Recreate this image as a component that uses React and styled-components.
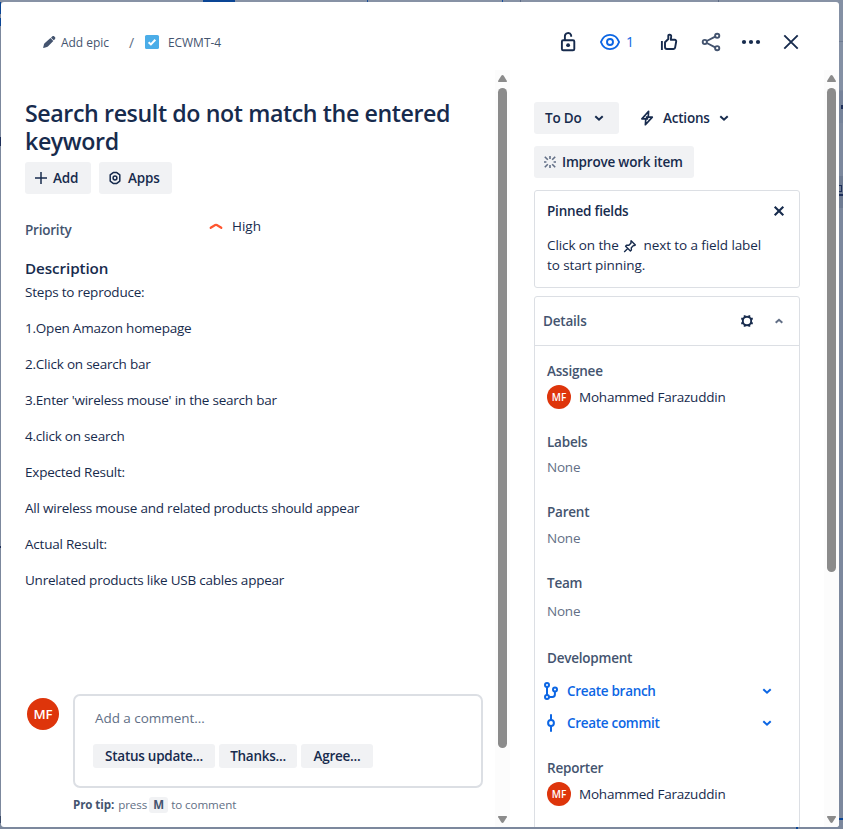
import React from 'react';
import styled, { createGlobalStyle } from 'styled-components';

const navy = '#172b4d';
const slate = '#44546f';
const subtle = '#626f86';
const blue = '#0c66e4';
const line = '#dcdfe4';
const neutral = '#f1f2f4';

const GlobalStyle = createGlobalStyle`
  * { box-sizing: border-box; }
  html, body { margin: 0; padding: 0; overflow: hidden; }
  body {
    font-family: "Open Sans", "Noto Sans", sans-serif;
    font-size: 13.5px;
    line-height: 20px;
    letter-spacing: -0.22px;
    color: ${navy};
  }
  svg { display: block; flex: none; overflow: visible; }
  p, h1, h2, h3 { margin: 0; }
`;

/* ---------- Frame ---------- */

const Backdrop = styled.div`
  position: relative;
  width: 843px;
  height: 829px;
  padding: 2px 4px 2px 1px;
  overflow: hidden;
  background: #7c889d;
`;

/* fragments of the board visible around the dialog */
const BoardMark = styled.span`
  position: absolute;
  left: ${(p) => p.$x}px;
  top: ${(p) => p.$y}px;
  width: ${(p) => p.$w}px;
  height: ${(p) => p.$h}px;
  background: ${(p) => p.$c};
`;

const Dialog = styled.div`
  position: relative;
  display: flex;
  flex-direction: column;
  width: 838px;
  height: 825px;
  border-radius: 3px;
  background: #fff;
  overflow: hidden;
`;

const Header = styled.header`
  display: flex;
  flex: none;
  justify-content: space-between;
  height: 68px;
  padding: 24px 36px 0 41px;
`;

const Breadcrumbs = styled.nav`
  display: flex;
  align-items: center;
  height: 33px;
  font-size: 12px;
  letter-spacing: -0.04px;
  color: ${slate};
`;

const Crumb = styled.span`
  display: flex;
  align-items: center;
  gap: ${(p) => p.$gap}px;
  svg { margin-bottom: 1px; }
`;

const CrumbSlash = styled.span`
  width: 16px;
  margin-left: 20px;
  font-size: 14px;
  color: ${subtle};
`;

const HeaderActions = styled.div`
  display: flex;
  align-items: center;
  gap: 18px;
  height: 32px;
`;

const IconCell = styled.span`
  display: flex;
  justify-content: center;
  width: ${(p) => p.$w || 24}px;
`;

const Watchers = styled.span`
  display: flex;
  align-items: center;
  gap: 4px;
  width: 41px;
  font-size: 14px;
  color: ${blue};
`;

const Body = styled.div`
  display: flex;
  flex: 1;
  min-height: 0;
`;

/* ---------- Scrollbars ---------- */

const Track = styled.div`
  display: flex;
  flex: none;
  flex-direction: column;
  align-items: center;
  width: 15px;
  padding: 5px 0 4px;
  background: #fcfcfc;
`;

const Thumb = styled.div`
  width: 9px;
  height: ${(p) => p.$h}px;
  margin: 6px 0 auto;
  border-radius: 4.5px;
  background: #8b8b8b;
`;

/* ---------- Main column ---------- */

const Main = styled.main`
  width: 494px;
  padding: 29px 12px 0 24px;
`;

const Title = styled.h1`
  width: 440px;
  font-size: 23.2px;
  font-weight: 600;
  line-height: 28px;
  letter-spacing: -0.4px;
`;

const ButtonRow = styled.div`
  display: flex;
  gap: ${(p) => p.$gap}px;
  margin-top: ${(p) => p.$top || 0}px;
`;

const Button = styled.span`
  display: flex;
  align-items: center;
  gap: ${(p) => p.$gap || 0}px;
  width: ${(p) => p.$w}px;
  height: 32px;
  padding-left: ${(p) => p.$pad}px;
  border-radius: 3px;
  background: ${(p) => (p.$plain ? 'transparent' : neutral)};
  font-weight: 600;
  letter-spacing: -0.2px;
  white-space: nowrap;
`;

const PriorityRow = styled.div`
  display: flex;
  align-items: flex-start;
  height: 42px;
  margin-top: 22px;
`;

const PriorityLabel = styled.span`
  width: 184px;
  padding-top: 4px;
  font-weight: 600;
  letter-spacing: -0.22px;
  color: ${slate};
`;

const PriorityValue = styled.span`
  display: flex;
  align-items: center;
  gap: 9px;
  letter-spacing: 0;
`;

const SectionTitle = styled.h2`
  font-size: 15.2px;
  font-weight: 600;
  line-height: 20px;
  letter-spacing: -0.08px;
`;

const Description = styled.div`
  display: flex;
  flex-direction: column;
  gap: 16px;
  margin-top: 4px;
`;

/* ---------- Comment ---------- */

const CommentArea = styled.div`
  display: flex;
  align-items: flex-start;
  gap: 14px;
  margin: 104px 0 0 2px;
`;

const Avatar = styled.span`
  display: flex;
  flex: none;
  align-items: center;
  justify-content: center;
  width: ${(p) => p.$size}px;
  height: ${(p) => p.$size}px;
  margin-top: ${(p) => p.$top || 0}px;
  border-radius: 50%;
  background: #de350b;
  color: #fff;
  font-size: ${(p) => (p.$size > 24 ? 13.2 : 10)}px;
  font-weight: 600;
  letter-spacing: 0;
`;

const CommentBox = styled.div`
  width: 410px;
  height: 94px;
  padding: 12px 0 0 18px;
  border: 2px solid ${line};
  border-radius: 7px;
`;

const Placeholder = styled.p`
  padding-left: 2px;
  letter-spacing: -0.05px;
  color: ${subtle};
`;

const Suggestions = styled.div`
  display: flex;
  gap: 4px;
  margin-top: 16px;
`;

const Suggestion = styled.span`
  width: ${(p) => p.$w}px;
  height: 24px;
  border-radius: 3px;
  background: ${neutral};
  font-weight: 600;
  line-height: 24px;
  letter-spacing: -0.26px;
  text-align: center;
`;

const ProTip = styled.p`
  display: flex;
  align-items: center;
  height: 16px;
  margin-top: 9px;
  font-size: 11.6px;
  letter-spacing: -0.08px;
  color: ${subtle};
  b { margin-right: 4px; font-weight: 700; letter-spacing: -0.1px; color: ${slate}; }
`;

const Key = styled.kbd`
  width: 19px;
  height: 16px;
  margin: 0 3px 0 2px;
  border-radius: 3px;
  background: ${neutral};
  font: 700 11.5px/16px "Open Sans", sans-serif;
  text-align: center;
  color: ${slate};
`;

/* ---------- Side column ---------- */

const Side = styled.aside`
  width: 314px;
  padding: 32px 24px 0;
  overflow: hidden;
`;

const Pinned = styled.section`
  height: 98px;
  margin-top: 12px;
  padding: 10px 14px 0 12px;
  border: 1px solid ${line};
  border-radius: 3px;
`;

const PanelHead = styled.div`
  display: flex;
  align-items: center;
  justify-content: space-between;
  font-weight: 600;
  letter-spacing: -0.2px;
`;

const PinnedText = styled.p`
  margin-top: 14px;
  letter-spacing: -0.1px;
  svg { display: inline-block; margin: 0 3px 0 1px; vertical-align: -3px; }
`;

const Details = styled.section`
  height: 560px;
  margin-top: 8px;
  border: 1px solid ${line};
  border-radius: 3px;
`;

const DetailsHead = styled(PanelHead)`
  height: 49px;
  padding: 0 15px 0 8px;
  border-bottom: 1px solid ${line};
  color: ${slate};
`;

const HeadIcons = styled.span`
  display: flex;
  align-items: center;
  gap: 20px;
`;

const Fields = styled.div`
  padding: 15px 12px 0;
`;

const Field = styled.div`
  height: ${(p) => p.$h}px;
`;

const FieldLabel = styled.h3`
  font-size: 13.5px;
  font-weight: 600;
  line-height: 20px;
  letter-spacing: -0.22px;
  color: ${slate};
`;

const FieldEmpty = styled.p`
  margin-top: ${(p) => p.$top}px;
  color: ${subtle};
`;

const Person = styled.div`
  display: flex;
  align-items: center;
  gap: 8px;
  height: 24px;
  margin-top: 4px;
`;

const DevLink = styled.div`
  display: flex;
  align-items: center;
  height: 20px;
  margin-top: ${(p) => p.$top}px;
  margin-left: -4px;
  padding-right: 15px;
  font-weight: 600;
  letter-spacing: -0.3px;
  color: ${blue};
  svg:first-child { margin-right: 8px; }
  svg:last-child { margin-left: auto; }
`;

/* ---------- Icons ---------- */

const Svg = ({ w = 16, h = w, color = navy, sw = 1.6, children }) => (
  <svg width={w} height={h} viewBox={`0 0 ${w} ${h}`} fill="none" stroke={color} strokeWidth={sw}>
    {children}
  </svg>
);

const Chevron = ({ color, up }) => (
  <Svg w={10} color={color} sw={2}>
    <path d={up ? 'M1.7 6.8 5 3.8l3.3 3' : 'M1.3 3.2 5 6.7l3.7-3.5'} />
  </Svg>
);

const Pencil = () => (
  <Svg w={14} color="none">
    <path fill={slate} d="M9 2.7 10.2 1.5c.6-.6 1.5-.6 2.1 0l.6.6c.6.6.6 1.5 0 2.1l-1.2 1.1zM8.5 3.1l2.8 2.8-5.4 5.6c-.3.3-.6.5-1 .6l-3.3.8c-.3.1-.5-.1-.4-.4l.8-3.3c.1-.4.3-.7.6-1z" />
  </Svg>
);

const TaskCheck = () => (
  <Svg w={14} color="#fff" sw={2}>
    <rect width="14" height="14" rx="1.6" fill="#4bade8" stroke="none" />
    <path d="m3.6 7.2 2.3 2.2 4.4-4.7" />
  </Svg>
);

const Unlock = () => (
  <Svg w={24} sw={1.9}>
    <rect x="5.9" y="10.3" width="12.4" height="9.9" rx="1.3" />
    <path d="M8.9 10.3V6.3a3.2 3.2 0 0 1 6.2-1.2l.1 1.6" />
    <circle cx="12.1" cy="15.2" r="1.9" fill={navy} stroke="none" />
  </Svg>
);

const Eye = () => (
  <Svg w={24} color={blue} sw={1.9}>
    <path d="M2.9 12C4.6 7.5 8 4.9 12 4.9s7.4 2.6 9.1 7.1c-1.7 4.5-5.1 7.1-9.1 7.1S4.6 16.5 2.9 12z" strokeLinejoin="round" />
    <circle cx="12" cy="12" r="3" />
  </Svg>
);

const ThumbUp = () => (
  <Svg w={24} sw={1.9}>
    <path d="M4.9 11v9" />
    <path d="M8 12.2 11.3 9V5.6c0-.5.4-.9.9-.9h.5c.9 0 1.6.8 1.5 1.7l-.4 3.4h4c.9 0 1.6.8 1.4 1.7l-1.1 6.2c-.1.8-.8 1.3-1.6 1.3H10c-1.1 0-2-.8-2-1.9z" strokeLinejoin="round" />
  </Svg>
);

const Share = () => (
  <Svg w={24} color={slate} sw={1.9}>
    <circle cx="5.8" cy="12" r="2.1" />
    <circle cx="18.2" cy="5.8" r="2.1" />
    <circle cx="18.2" cy="18.2" r="2.1" />
    <path d="m7.8 11 8.4-4.3M7.8 13l8.4 4.3" />
  </Svg>
);

const More = () => (
  <Svg w={20} color="none">
    {[3, 10, 17].map((x) => <circle key={x} cx={x} cy="10" r="2.1" fill={navy} />)}
  </Svg>
);

const Close = () => (
  <Svg w={24} sw={1.9}><path d="m5.3 5.3 13.4 13.4M18.7 5.3 5.3 18.7" /></Svg>
);

const SmallClose = () => (
  <Svg w={12} sw={2.1}><path d="m1.7 1.7 8.6 8.6M10.3 1.7 1.7 10.3" /></Svg>
);

const Plus = () => (
  <Svg w={12} sw={1.5}><path d="M6 0v12M0 6h12" /></Svg>
);

const AppsHex = () => (
  <Svg w={12} h={14} sw={1.5}>
    <path d="M4.2 1.6h3.6l3 2.3v6.2l-3 2.3H4.2l-3-2.3V3.9z" strokeLinejoin="round" />
    <circle cx="6" cy="7" r="1.9" />
  </Svg>
);

const Bolt = () => (
  <Svg w={14} h={16} sw={1.7}>
    <path d="M8.6 1.3 1.9 8.9h3.9l-.4 5.8 6.9-7.6H8.2z" strokeLinejoin="round" />
    <path d="M5.8 8.9h2.4M5.8 7.1h2.4" />
  </Svg>
);

const Burst = () => (
  <Svg w={12} color={subtle} sw={1.6}>
    <path d="M6 0v3M6 9v3M0 6h2.4M9.6 6H12M.8.8l3 3M8.2 8.2l3 3M.8 11.2l3-3M8.2 3.8l3-3" />
  </Svg>
);

const Pin = () => (
  <Svg w={14} sw={1.4}>
    <path d="m8.1 1.7 4.3 4.2-1.1.7-.8-.1-2.2 2.2.1 2.4-1 .9-4.8-4.8.9-1 2.4.1 2.2-2.2-.2-.8zM5 9.3l-3.8 3.6" strokeLinejoin="round" />
  </Svg>
);

const Gear = () => (
  <Svg w={14} sw={1.9}>
    <circle cx="7" cy="7" r="4.2" />
    <path d="M4.7 1.2v2.1M9.3 1.2v2.1M4.7 10.7v2.1M9.3 10.7v2.1M1.2 4.7h2.1M1.2 9.3h2.1M10.7 4.7h2.1M10.7 9.3h2.1" />
  </Svg>
);

const HighIcon = () => (
  <Svg w={14} color="#ff5630" sw={2.2}>
    <path d="M1.7 8.8 6.2 6q.8-.4 1.6 0l4.5 2.8" strokeLinecap="round" />
  </Svg>
);

const Branch = () => (
  <Svg w={16} h={20} color={blue} sw={2}>
    <circle cx="4" cy="4" r="2" />
    <circle cx="4" cy="16" r="2" />
    <circle cx="12" cy="8.6" r="2" />
    <path d="M4 6v8M6 16h3.4q2.5 0 2.5-2.4v-3" />
  </Svg>
);

const Commit = () => (
  <Svg w={16} h={20} color={blue} sw={2}>
    <circle cx="8" cy="10" r="2.9" />
    <path d="M8 1.2v5.9M8 12.9v5.9" />
  </Svg>
);

const Arrow = ({ down }) => (
  <Svg w={9} h={7} color="none">
    <path fill="#8b8b8b" d={down ? 'M.5 0h8q.8.5.3 1.3L5.7 6.2q-1.2 1.4-2.4 0L.2 1.3Q-.3.5.5 0z' : 'M.5 7h8q.8-.5.3-1.3L5.7.8q-1.2-1.4-2.4 0L.2 5.7Q-.3 6.5.5 7z'} />
  </Svg>
);

const Scrollbar = ({ h }) => (
  <Track>
    <Arrow />
    <Thumb $h={h} />
    <Arrow down />
  </Track>
);

/* ---------- Content ---------- */

const steps = [
  'Steps to reproduce:',
  '1.Open Amazon homepage',
  '2.Click on search bar',
  "3.Enter 'wireless mouse' in the search bar",
  '4.click on search',
  'Expected Result:',
  'All wireless mouse and related products should appear',
  'Actual Result:',
  'Unrelated products like USB cables appear',
];

const marks = [
  [0, 0, 843, 2, '#8792a5'],
  [839, 0, 4, 90, '#8490a4'],
  [203, 0, 32, 2, '#0a4595'],
  [367, 0, 1, 2, '#174e9b'],
  [502, 0, 1, 2, '#174e9b'],
  [520, 0, 1, 2, '#5d6c86'],
  [718, 0, 1, 2, '#5d6c86'],
  [0, 2, 1, 12, '#0a4595'],
  [0, 18, 1, 8, '#0a4595'],
  [0, 137, 1, 9, '#1d2f5a'],
  [0, 546, 1, 2, '#1d2f5a'],
  [0, 816, 1, 7, '#3a4a68'],
  [839, 41, 4, 1, '#6f7c93'],
  [839, 91, 4, 32, '#76839a'],
  [841, 105, 2, 4, '#1d2f5a'],
  [839, 176, 4, 32, '#6f7c93'],
  [839, 185, 3, 1, '#1d2f5a'],
  [841, 185, 1, 7, '#1d2f5a'],
  [839, 191, 3, 1, '#1d2f5a'],
  [839, 194, 4, 2, '#1d2f5a'],
  [839, 818, 4, 2, '#0a4595'],
  [796, 827, 2, 2, '#0a4595'],
];

export default function App() {
  return (
    <>
      <GlobalStyle />
      <Backdrop>
        {marks.map(([x, y, w, h, c]) => (
          <BoardMark key={`${x}-${y}-${w}`} $x={x} $y={y} $w={w} $h={h} $c={c} />
        ))}
        <Dialog>
          <Header>
            <Breadcrumbs>
              <Crumb $gap={5}><Pencil />Add epic</Crumb>
              <CrumbSlash>/</CrumbSlash>
              <Crumb $gap={9}><TaskCheck />ECWMT-4</Crumb>
            </Breadcrumbs>
            <HeaderActions>
              <IconCell><Unlock /></IconCell>
              <Watchers><Eye />1</Watchers>
              <IconCell><ThumbUp /></IconCell>
              <IconCell><Share /></IconCell>
              <IconCell $w={20}><More /></IconCell>
              <IconCell><Close /></IconCell>
            </HeaderActions>
          </Header>
          <Body>
            <Main>
              <Title>Search result do not match the entered keyword</Title>
              <ButtonRow $gap={8} $top={7}>
                <Button $w={66} $pad={10} $gap={6}><Plus />Add</Button>
                <Button $w={73} $pad={10} $gap={7}><AppsHex />Apps</Button>
              </ButtonRow>
              <PriorityRow>
                <PriorityLabel>Priority</PriorityLabel>
                <PriorityValue><HighIcon />High</PriorityValue>
              </PriorityRow>
              <SectionTitle>Description</SectionTitle>
              <Description>
                {steps.map((s) => <p key={s}>{s}</p>)}
              </Description>
              <CommentArea>
                <Avatar $size={32} $top={4}>MF</Avatar>
                <div>
                  <CommentBox>
                    <Placeholder>Add a comment…</Placeholder>
                    <Suggestions>
                      <Suggestion $w={122}>Status update...</Suggestion>
                      <Suggestion $w={78}>Thanks...</Suggestion>
                      <Suggestion $w={72}>Agree...</Suggestion>
                    </Suggestions>
                  </CommentBox>
                  <ProTip><b>Pro tip:</b>press <Key>M</Key> to comment</ProTip>
                </div>
              </CommentArea>
            </Main>
            <Scrollbar h={660} />
            <Side>
              <ButtonRow $gap={8}>
                <Button $w={85} $pad={11} $gap={12}>To Do<Chevron /></Button>
                <Button $plain $w={110} $pad={13} $gap={9}><Bolt />Actions<Chevron /></Button>
              </ButtonRow>
              <ButtonRow $top={12}>
                <Button $w={160} $pad={10} $gap={6}><Burst />Improve work item</Button>
              </ButtonRow>
              <Pinned>
                <PanelHead>Pinned fields<SmallClose /></PanelHead>
                <PinnedText>Click on the <Pin /> next to a field label<br />to start pinning.</PinnedText>
              </Pinned>
              <Details>
                <DetailsHead>
                  Details
                  <HeadIcons><Gear /><Chevron up color={subtle} /></HeadIcons>
                </DetailsHead>
                <Fields>
                  <Field $h={71}>
                    <FieldLabel>Assignee</FieldLabel>
                    <Person><Avatar $size={24}>MF</Avatar>Mohammed Farazuddin</Person>
                  </Field>
                  <Field $h={70}>
                    <FieldLabel>Labels</FieldLabel>
                    <FieldEmpty $top={5}>None</FieldEmpty>
                  </Field>
                  <Field $h={71}>
                    <FieldLabel>Parent</FieldLabel>
                    <FieldEmpty $top={6}>None</FieldEmpty>
                  </Field>
                  <Field $h={75}>
                    <FieldLabel>Team</FieldLabel>
                    <FieldEmpty $top={8}>None</FieldEmpty>
                  </Field>
                  <Field $h={110}>
                    <FieldLabel>Development</FieldLabel>
                    <DevLink $top={13}><Branch />Create branch<Chevron color={blue} /></DevLink>
                    <DevLink $top={12}><Commit />Create commit<Chevron color={blue} /></DevLink>
                  </Field>
                  <Field $h={60}>
                    <FieldLabel>Reporter</FieldLabel>
                    <Person><Avatar $size={24}>MF</Avatar>Mohammed Farazuddin</Person>
                  </Field>
                </Fields>
              </Details>
            </Side>
            <Scrollbar h={484} />
          </Body>
        </Dialog>
      </Backdrop>
    </>
  );
}
